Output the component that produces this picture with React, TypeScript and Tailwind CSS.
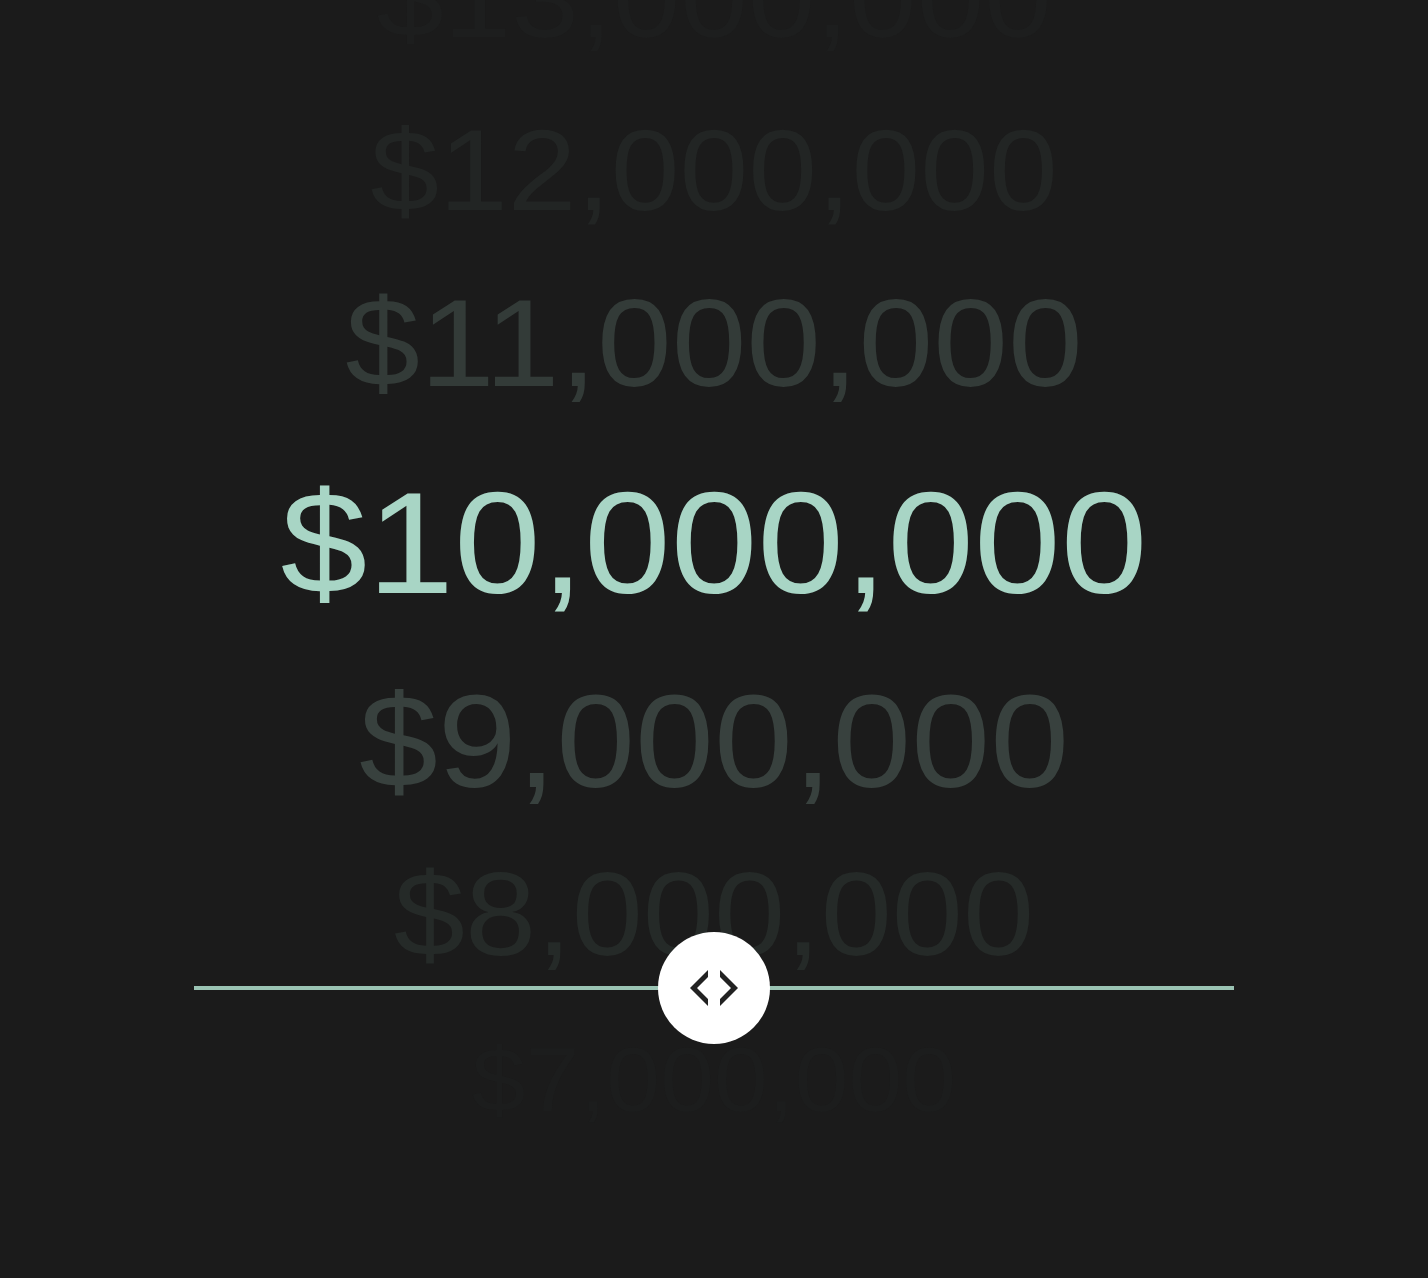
import React from "react";

const rows = [
  { label: "$13,000,000", cls: "mt-[-58px] text-[113px] h-[113px] text-[#1d1e1e]" },
  { label: "$12,000,000", cls: "mt-[58px] text-[115px] h-[115px] text-[#222524]" },
  { label: "$11,000,000", cls: "mt-[52px] text-[125px] h-[125px] text-[#333b38]" },
  { label: "$10,000,000", cls: "mt-[66px] text-[145px] h-[145px] text-[#a8d5c5]" },
  { label: "$9,000,000", cls: "mt-[60px] text-[132px] h-[132px] text-[#38413e]" },
  { label: "$8,000,000", cls: "mt-[46px] text-[119px] h-[119px] text-[#252a28]" },
  { label: "$7,000,000", cls: "mt-[62px] text-[90px] h-[90px] text-[#1c1d1d]" },
];

const Knob = () => {
  return (
    <div className="w-[112px] h-[112px] rounded-full bg-white flex items-center justify-center">
      <svg width="112" height="112" viewBox="0 0 112 112">
        <polygon points="32,56 50,38 50,45 39,56 50,67 50,74" fill="#222222" />
        <polygon points="80,56 62,38 62,45 73,56 62,67 62,74" fill="#222222" />
      </svg>
    </div>
  );
};

export default function App() {
  return (
    <div className="relative w-full h-[1278px] overflow-hidden bg-[#1b1b1b] font-['Liberation_Sans',Arial,sans-serif]">
      <div className="flex flex-col items-center scale-x-[1.075]">
        {rows.map((r) => (
          <div key={r.label} className={`leading-none whitespace-nowrap ${r.cls}`}>
            {r.label}
          </div>
        ))}
      </div>

      {/* slider sits over the wheel */}
      <div className="absolute left-0 right-0 top-[932px] flex justify-center">
        <div className="relative w-[1040px] h-[112px] flex items-center justify-center">
          <div className="absolute left-0 right-0 top-[54px] h-[4px] bg-[#9ac3b3]" />
          <div className="relative">
            <Knob />
          </div>
        </div>
      </div>
    </div>
  );
}
